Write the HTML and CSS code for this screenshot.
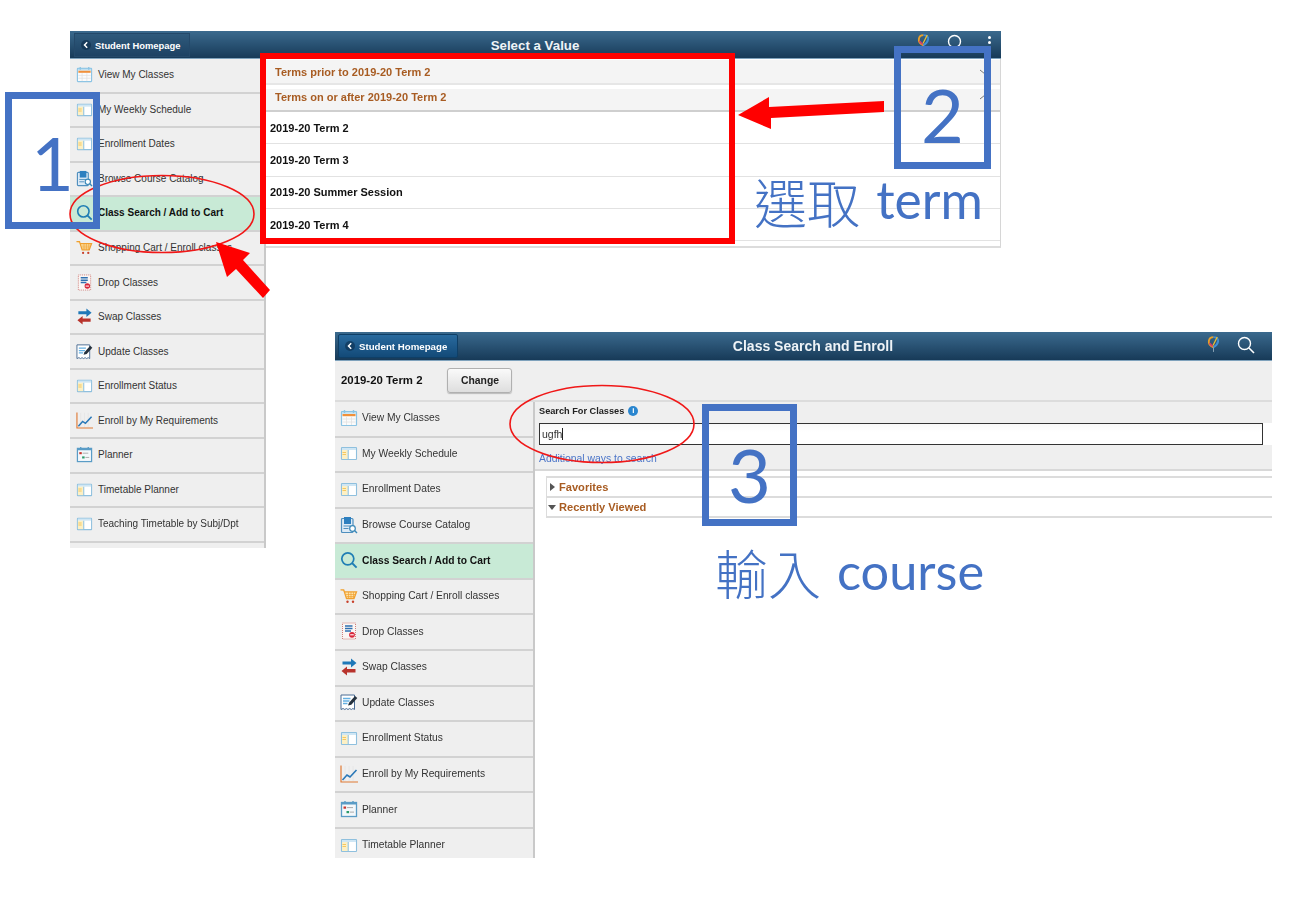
FILE: index.html
```html
<!DOCTYPE html>
<html lang="zh-Hant">
<head>
<meta charset="utf-8">
<title>Class Search steps</title>
<link rel="stylesheet" href="styles.css">
</head>
<body>
<svg class="sprite" aria-hidden="true">
  <defs>
    <symbol id="i-cal" viewBox="0 0 18 18">
      <rect x="1.500" y="2.500" width="15" height="14" rx=".5" fill="#fbfbfb" stroke="#8cc4e4" stroke-width="1.200"/>
      <rect x="2" y="3" width="14" height="1.800" fill="#bfe0f2"/>
      <rect x="2.500" y="5" width="13" height="2.200" fill="#f0903a"/>
      <path d="M4.500 1v3M13.500 1v3" stroke="#8cc4e4" stroke-width="1.400"/>
      <path d="M2.500 10h13M2.500 13h13M6.500 7.500v8.500M11.500 7.500v8.500" stroke="#e2e2e2" stroke-width=".8"/>
    </symbol>
    <symbol id="i-table" viewBox="0 0 18 18">
      <rect x="1.500" y="3.500" width="15" height="12" rx=".5" fill="#fff" stroke="#8fc0de" stroke-width="1.100"/>
      <rect x="2" y="4" width="14" height="2" fill="#cfe6f4"/>
      <rect x="2" y="6" width="5.800" height="9" fill="#fdf0c4"/>
      <path d="M2.500 8.500h3.500M2.500 10.500h3.500" stroke="#f6c860" stroke-width="1.100"/>
      <path d="M8.200 6v9" stroke="#8fc0de" stroke-width="1.100"/>
    </symbol>
    <symbol id="i-cat" viewBox="0 0 18 18">
      <rect x="1.500" y="2.500" width="11.500" height="14" rx="1" fill="#dceaf6" stroke="#4f8fbe" stroke-width="1.200"/>
      <rect x="4" y="1" width="7" height="7" fill="#2d7fbf"/>
      <path d="M3.500 10h7M3.500 12.500h5" stroke="#4f8fbe"/>
      <circle cx="12.500" cy="12.500" r="2.800" fill="#fff" stroke="#3a88b8" stroke-width="1.200"/>
      <path d="M14.500 14.500l2.500 2.500" stroke="#3a88b8" stroke-width="1.400"/>
    </symbol>
    <symbol id="i-search" viewBox="0 0 18 18">
      <circle cx="7.800" cy="7.800" r="6" fill="none" stroke="#1f7eb4" stroke-width="1.700"/>
      <path d="M12 12l4.600 4.600" stroke="#1f7eb4" stroke-width="1.900"/>
    </symbol>
    <symbol id="i-cart" viewBox="0 0 18 18">
      <path d="M.5 2.800h3.200l2.800 8.700h7.500l2.500-6.700H4.500" fill="#fde3a8" stroke="#f0a030" stroke-width="1.300"/>
      <path d="M6 7.500h9M6.500 9.500h8M8.500 5v6.500M11 5v6.500M13.500 5v6.500" stroke="#f0a030" stroke-width=".7"/>
      <circle cx="7.500" cy="14.800" r="1.200" fill="#c8402a"/>
      <circle cx="13" cy="14.800" r="1.200" fill="#c8402a"/>
    </symbol>
    <symbol id="i-drop" viewBox="0 0 18 18">
      <rect x="2.500" y="1" width="13" height="16" fill="#fbf6f4" stroke="#d0807a" stroke-dasharray="1 1"/>
      <path d="M5 4h7.500M5 6.500h7.500M5 9h6" stroke="#2f70b0" stroke-width="1.600"/>
      <circle cx="12" cy="12.800" r="2.900" fill="#d8263a"/>
      <path d="M10.200 12.800h3.600" stroke="#fff" stroke-width="1.100"/>
    </symbol>
    <symbol id="i-swap" viewBox="0 0 18 18">
      <path d="M2.500 3.500H11V.5l5.500 4.500L11 9.500v-3H2.500z" fill="#1f78b8"/>
      <path d="M15.500 11H7V8.500L1.500 13 7 17.500V14.500h8.500z" fill="#b8332c"/>
    </symbol>
    <symbol id="i-upd" viewBox="0 0 18 18">
      <path d="M1 2h13.500v14.500l-1.600-1-1.600 1-1.600-1-1.700 1-1.600-1-1.600 1-1.700-1L1 16.500z" fill="#fff" stroke="#4a6c94"/>
      <path d="M3 5.500h7.500M3 8h6.500M3 10.500h4.500" stroke="#64b0e2" stroke-width="1.400"/>
      <path d="M8 12.500l1-2.800 6-6.700 2.300 2-6 6.700z" fill="#26323e"/>
    </symbol>
    <symbol id="i-chart" viewBox="0 0 18 18">
      <path d="M5 1v15M9 1v15M13 1v15" stroke="#e4e4e4" stroke-width=".8"/>
      <path d="M1 .5v16.500h17" fill="none" stroke="#e07a35" stroke-width="1.200"/>
      <path d="M2.500 15l4.500-5 3 2 6.500-7" fill="none" stroke="#2a78b8" stroke-width="1.600"/>
    </symbol>
    <symbol id="i-plan" viewBox="0 0 18 18">
      <rect x="1.500" y="2.500" width="15" height="14" fill="#f4f8fb" stroke="#5a9cc6" stroke-width="1.300"/>
      <rect x="1.500" y="2.500" width="15" height="2" fill="#5a9cc6"/>
      <path d="M5 1v3M13 1v3" stroke="#5a9cc6" stroke-width="1.400"/>
      <rect x="3.500" y="6.500" width="2.600" height="2.200" fill="#c8342c"/>
      <path d="M7 7.600h6" stroke="#aaa"/>
      <rect x="6.500" y="11" width="2.600" height="2.200" fill="#2a9a6a"/>
      <path d="M10 12.100h4" stroke="#aaa"/>
    </symbol>
    <symbol id="i-logo" viewBox="0 0 14 18">
      <path d="M7 12C3.500 10.500 1.500 8 2 5S5 1 7 1" fill="none" stroke="#e8a02a" stroke-width="2"/>
      <path d="M7 1c3 0 5.500 1.500 5 4.500S9.500 10.500 7 12" fill="none" stroke="#3f8fd6" stroke-width="2"/>
      <path d="M2.500 7.500L6 11" stroke="#d83a6a" stroke-width="1.800"/>
      <path d="M11 1L6.500 10" stroke="#f0c030" stroke-width="1.400"/>
      <path d="M7 12v5" stroke="#8fa6b8"/>
    </symbol>
    <symbol id="i-find" viewBox="0 0 18 18">
      <circle cx="7.500" cy="7.500" r="6" fill="none" stroke="#fff" stroke-width="1.400"/>
      <path d="M12 12l5 5" stroke="#fff" stroke-width="1.600"/>
    </symbol>
  </defs>
</svg>

<main class="canvas">

  <section class="window win-one">
    <header class="bar">
      <div class="back back-flat"><span class="back-dot"><svg viewBox="0 0 8 8" class="back-arrow"><path d="M5.200 1.200L2.500 4l2.700 2.800" fill="none" stroke="#fff" stroke-width="1.500"/></svg></span>Student Homepage</div>
      <h1 class="bar-title title-one">Select a Value</h1>
      <div class="bar-tools tools-one">
        <svg class="tool-logo"><use href="#i-logo"/></svg>
        <svg class="tool-find"><use href="#i-find"/></svg>
        <span class="kebab"><i></i><i></i><i></i></span>
      </div>
    </header>
    <div class="split">
      <nav class="side side-one">
        <a class="item"><svg class="ic"><use href="#i-cal"/></svg>View My Classes</a>
        <a class="item"><svg class="ic"><use href="#i-table"/></svg>My Weekly Schedule</a>
        <a class="item"><svg class="ic"><use href="#i-table"/></svg>Enrollment Dates</a>
        <a class="item"><svg class="ic"><use href="#i-cat"/></svg>Browse Course Catalog</a>
        <a class="item active"><svg class="ic"><use href="#i-search"/></svg>Class Search / Add to Cart</a>
        <a class="item"><svg class="ic"><use href="#i-cart"/></svg>Shopping Cart / Enroll classes</a>
        <a class="item"><svg class="ic"><use href="#i-drop"/></svg>Drop Classes</a>
        <a class="item"><svg class="ic"><use href="#i-swap"/></svg>Swap Classes</a>
        <a class="item"><svg class="ic"><use href="#i-upd"/></svg>Update Classes</a>
        <a class="item"><svg class="ic"><use href="#i-table"/></svg>Enrollment Status</a>
        <a class="item"><svg class="ic"><use href="#i-chart"/></svg>Enroll by My Requirements</a>
        <a class="item"><svg class="ic"><use href="#i-plan"/></svg>Planner</a>
        <a class="item"><svg class="ic"><use href="#i-table"/></svg>Timetable Planner</a>
        <a class="item"><svg class="ic"><use href="#i-table"/></svg>Teaching Timetable by Subj/Dpt</a>
      </nav>
      <div class="dialog">
        <div class="group group-first">Terms prior to 2019-20 Term 2<svg class="chev" viewBox="0 0 6 6"><path d="M0 1l5 4" fill="none" stroke="#777"/></svg></div>
        <div class="group group-second">Terms on or after 2019-20 Term 2<svg class="chev" viewBox="0 0 6 6"><path d="M0 5l5-4" fill="none" stroke="#777"/></svg></div>
        <div class="term">2019-20 Term 2</div>
        <div class="term">2019-20 Term 3</div>
        <div class="term">2019-20 Summer Session</div>
        <div class="term">2019-20 Term 4</div>
      </div>
    </div>
  </section>

  <section class="window win-two">
    <header class="bar bar-two">
      <div class="back back-raised"><span class="back-dot"><svg viewBox="0 0 8 8" class="back-arrow"><path d="M5.200 1.200L2.500 4l2.700 2.800" fill="none" stroke="#fff" stroke-width="1.500"/></svg></span>Student Homepage</div>
      <h1 class="bar-title title-two">Class Search and Enroll</h1>
      <div class="bar-tools tools-two">
        <svg class="tool-logo"><use href="#i-logo"/></svg>
        <svg class="tool-find"><use href="#i-find"/></svg>
      </div>
    </header>
    <div class="termbar"><b>2019-20 Term 2</b><button class="change" type="button">Change</button></div>
    <div class="split">
      <nav class="side side-two">
        <a class="item"><svg class="ic"><use href="#i-cal"/></svg>View My Classes</a>
        <a class="item"><svg class="ic"><use href="#i-table"/></svg>My Weekly Schedule</a>
        <a class="item"><svg class="ic"><use href="#i-table"/></svg>Enrollment Dates</a>
        <a class="item"><svg class="ic"><use href="#i-cat"/></svg>Browse Course Catalog</a>
        <a class="item active"><svg class="ic"><use href="#i-search"/></svg>Class Search / Add to Cart</a>
        <a class="item"><svg class="ic"><use href="#i-cart"/></svg>Shopping Cart / Enroll classes</a>
        <a class="item"><svg class="ic"><use href="#i-drop"/></svg>Drop Classes</a>
        <a class="item"><svg class="ic"><use href="#i-swap"/></svg>Swap Classes</a>
        <a class="item"><svg class="ic"><use href="#i-upd"/></svg>Update Classes</a>
        <a class="item"><svg class="ic"><use href="#i-table"/></svg>Enrollment Status</a>
        <a class="item"><svg class="ic"><use href="#i-chart"/></svg>Enroll by My Requirements</a>
        <a class="item"><svg class="ic"><use href="#i-plan"/></svg>Planner</a>
        <a class="item"><svg class="ic"><use href="#i-table"/></svg>Timetable Planner</a>
      </nav>
      <div class="pane">
        <div class="search">
          <div class="search-label">Search For Classes<span class="info">i</span></div>
          <div class="search-row"><div class="field">ugfh<span class="caret"></span></div><div class="field-end"></div></div>
          <a class="more">Additional ways to search</a>
        </div>
        <div class="acc">
          <div class="acc-row"><span class="tri tri-right"></span>Favorites</div>
          <div class="acc-row"><span class="tri tri-down"></span>Recently Viewed</div>
        </div>
      </div>
    </div>
  </section>

  <svg class="marks" viewBox="0 0 1298 898" aria-hidden="true">
    <ellipse class="ring" cx="162" cy="214" rx="92" ry="38.500"/>
    <ellipse class="ring" cx="602" cy="424" rx="92" ry="38.500"/>
    <polygon class="arrow" points="216,242 250,253 243,260 270,290 263,298 236,269 227,277"/>
    <polygon class="arrow" points="738,115 769,97 769,107 884,101 884,112 771,118 771,129"/>
  </svg>
  <div class="redbox"></div>

  <div class="step step-one">1</div>
  <div class="step step-two">2</div>
  <div class="step step-three">3</div>

  <p class="note note-term"><span class="han">選取</span> term</p>
  <p class="note note-course"><span class="han">輸入</span> course</p>
</main>
</body>
</html>
```

FILE: styles.css
```css
* { box-sizing: border-box; }

html, body {
  margin: 0;
  padding: 0;
  background: #fff;
}

body {
  font-family: "Liberation Sans", Arial, sans-serif;
  color: #333;
}

.sprite {
  position: absolute;
  width: 0;
  height: 0;
}

.canvas {
  position: relative;
  width: 1298px;
  height: 898px;
  overflow: hidden;
}

/* Screenshots placed on the slide */
.window {
  position: absolute;
  overflow: hidden;
  filter: blur(.3px);
}

.win-one {
  left: 70px;
  top: 31px;
  width: 931px;
  height: 517px;
}

.win-two {
  left: 335px;
  top: 332px;
  width: 937px;
  height: 526px;
  background: #fff;
}

/* Title bar */
.bar {
  display: grid;
  grid-template-columns: 1fr auto 1fr;
  align-items: center;
  height: 28px;
  padding: 2px 0 2px 4px;
  background: linear-gradient(#3b6a8e, #173a58);
  border-bottom: 1px solid #7fa2bc;
}

.bar-two {
  height: 29px;
  padding-left: 3px;
}

.back {
  display: flex;
  align-items: center;
  justify-self: start;
  color: #fff;
  font-weight: bold;
  white-space: nowrap;
}

.back-flat {
  width: 116px;
  height: 24px;
  padding-left: 6px;
  font-size: 9.400px;
  background: linear-gradient(#2f5a7c, #1d4263);
  border: 1px solid #24496a;
}

.back-raised {
  width: 120px;
  height: 24px;
  padding-left: 6px;
  font-size: 9.700px;
  background: linear-gradient(#296a9e, #134a78);
  border: 1px solid #0f3f66;
  border-radius: 2px;
}

.back-dot {
  display: flex;
  align-items: center;
  justify-content: center;
  width: 10px;
  height: 10px;
  margin-right: 4px;
  border-radius: 50%;
  background: rgba(10, 40, 70, .55);
}

.back-arrow {
  width: 8px;
  height: 8px;
}

.bar-title {
  margin: 0;
  color: #eef3f7;
  font-weight: bold;
  white-space: nowrap;
}

.title-one {
  font-size: 13.300px;
  margin-left: -5px;
}

.title-two {
  font-size: 14px;
  margin-left: 16px;
}

.bar-tools {
  display: flex;
  align-items: center;
  justify-self: end;
}

.tools-one {
  gap: 17px;
  padding-right: 10px;
  margin-top: -5px;
}

.tools-two {
  gap: 17px;
  padding-right: 17px;
  margin-top: -3px;
}

.tool-logo {
  width: 13px;
  height: 17px;
}

.tool-find {
  width: 18px;
  height: 18px;
}

.kebab {
  display: flex;
  flex-direction: column;
  gap: 2px;
  margin-left: 6px;
}

.kebab i {
  width: 3px;
  height: 3px;
  border-radius: 50%;
  background: #fff;
}

/* Sidebar + content */
.split {
  display: flex;
  align-items: flex-start;
}

.side {
  flex: none;
  background: #efefef;
  border-right: 2px solid #c9c9c9;
}

.side-one {
  width: 196px;
  height: 489px;
}

.side-two {
  width: 200px;
  height: 458px;
}

.item {
  display: flex;
  align-items: center;
  border-bottom: 2px solid #d2d2d2;
  color: #333;
  white-space: nowrap;
}

.side-one .item {
  height: 34.550px;
  padding-left: 6px;
  padding-bottom: 1px;
  font-size: 10px;
}

.side-two .item {
  height: 35.580px;
  padding-left: 5px;
  padding-bottom: 2px;
  font-size: 10.250px;
}

.ic {
  flex: none;
  width: 17px;
  height: 17px;
  margin-right: 5px;
}

.side-two .ic {
  width: 18px;
  height: 18px;
  margin-right: 4px;
}

.item.active {
  background: #c8ead6;
  color: #111;
  font-weight: bold;
}

/* Term dialog */
.dialog {
  flex: 1;
  height: 189px;
  padding-top: 1px;
  background: #fff;
  border-right: 1px solid #d6d6d6;
  border-bottom: 2px solid #dcdcdc;
}

.group {
  display: flex;
  align-items: center;
  justify-content: space-between;
  padding-left: 9px;
  background: #f4f4f4;
  color: #a85c22;
  font-size: 11px;
  font-weight: bold;
}

.group-first {
  height: 25px;
  border-bottom: 2px solid #e6e6e6;
  margin-bottom: 4px;
}

.group-second {
  height: 23px;
  padding-bottom: 5px;
  border-bottom: 2px solid #cfcfcf;
}

.chev {
  width: 6px;
  height: 6px;
  margin-right: 14px;
}

.term {
  display: flex;
  align-items: center;
  height: 32.300px;
  padding-left: 4px;
  color: #111;
  font-size: 11px;
  font-weight: bold;
  border-bottom: 1.500px solid #e2e2e2;
}

/* Second window */
.termbar {
  display: flex;
  align-items: center;
  height: 41px;
  padding-left: 6px;
  padding-bottom: 1px;
  background: #efefef;
  border-bottom: 2px solid #dcdcdc;
  font-size: 11.400px;
  color: #111;
}

.change {
  width: 65px;
  height: 25px;
  margin-left: 25px;
  padding: 0;
  font: bold 10.400px "Liberation Sans", Arial, sans-serif;
  color: #222;
  background: linear-gradient(#fafafa, #dedede);
  border: 1px solid #b0b0b0;
  border-radius: 3px;
  box-shadow: 0 1px 1px #bbb;
}

.pane {
  flex: 1;
  min-width: 0;
}

.search {
  height: 69px;
  padding-top: 3px;
  background: #efefef;
  border-bottom: 2px solid #d8d8d8;
}

.search-label {
  display: flex;
  align-items: center;
  height: 12px;
  margin: 0 0 6px 4px;
  font-size: 9.200px;
  font-weight: bold;
  color: #222;
}

.info {
  display: flex;
  align-items: center;
  justify-content: center;
  width: 10px;
  height: 10px;
  margin-left: 4px;
  border-radius: 50%;
  background: #2a86cf;
  color: #fff;
  font-size: 8px;
  line-height: 1;
}

.search-row {
  display: flex;
}

.field {
  display: flex;
  align-items: center;
  width: 724px;
  height: 22px;
  margin-left: 4px;
  padding-left: 2px;
  background: linear-gradient(#f8f8f8, #fff 40%);
  border: 1px solid #333;
  font-size: 10.500px;
  color: #333;
}

.caret {
  width: 1px;
  height: 12px;
  background: #222;
}

.field-end {
  flex: 1;
  background: #fff;
}

.more {
  display: block;
  margin: 8px 0 0 4px;
  color: #4a74c8;
  font-size: 10.400px;
}

.acc {
  margin: 5px 0 0 11px;
  border-top: 2px solid #dcdcdc;
  border-left: 1px solid #dcdcdc;
}

.acc-row {
  display: flex;
  align-items: center;
  height: 20px;
  padding-left: 2px;
  border-bottom: 2px solid #dcdcdc;
  color: #a85c22;
  font-size: 11.100px;
  font-weight: bold;
}

.tri {
  width: 0;
  height: 0;
  margin-right: 3px;
  border-style: solid;
}

.tri-right {
  margin-left: 1px;
  margin-right: 4px;
  border-width: 4px 0 4px 5px;
  border-color: transparent transparent transparent #555;
}

.tri-down {
  margin-left: -1px;
  margin-right: 3px;
  border-width: 5px 4.500px 0;
  border-color: #555 transparent transparent;
}

/* Annotations on top of the screenshots */
.marks {
  position: absolute;
  left: 0;
  top: 0;
  width: 1298px;
  height: 898px;
  pointer-events: none;
}

.ring {
  fill: none;
  stroke: #f01818;
  stroke-width: 1.600;
}

.arrow {
  fill: #ff0000;
}

.redbox {
  position: absolute;
  left: 260px;
  top: 53px;
  width: 475px;
  height: 191px;
  border: 6px solid #ff0000;
}

.step {
  position: absolute;
  display: flex;
  justify-content: center;
  border: 7px solid #4472c4;
  color: #4472c4;
  font-family: Lato, sans-serif;
  font-size: 74px;
  line-height: 1;
}

.step-one {
  left: 5px;
  top: 92px;
  width: 95px;
  height: 137px;
  padding-top: 27px;
}

.step-two {
  left: 894px;
  top: 46px;
  width: 97px;
  height: 123px;
  padding-top: 25px;
}

.step-three {
  left: 702px;
  top: 404px;
  width: 95px;
  height: 122px;
  padding-top: 27px;
}

.note {
  position: absolute;
  margin: 0;
  color: #4472c4;
  font-family: Lato, "Noto Sans CJK TC", sans-serif;
  font-size: 50.500px;
  line-height: 1;
  white-space: nowrap;
}

.han {
  margin-right: 3px;
  font-family: "Noto Sans CJK TC", sans-serif;
  font-size: 53px;
  font-weight: 300;
  vertical-align: -5px;
}

.note-term {
  left: 754px;
  top: 174px;
  font-size: 51.500px;
}

.note-course {
  left: 715px;
  top: 546px;
}
```
